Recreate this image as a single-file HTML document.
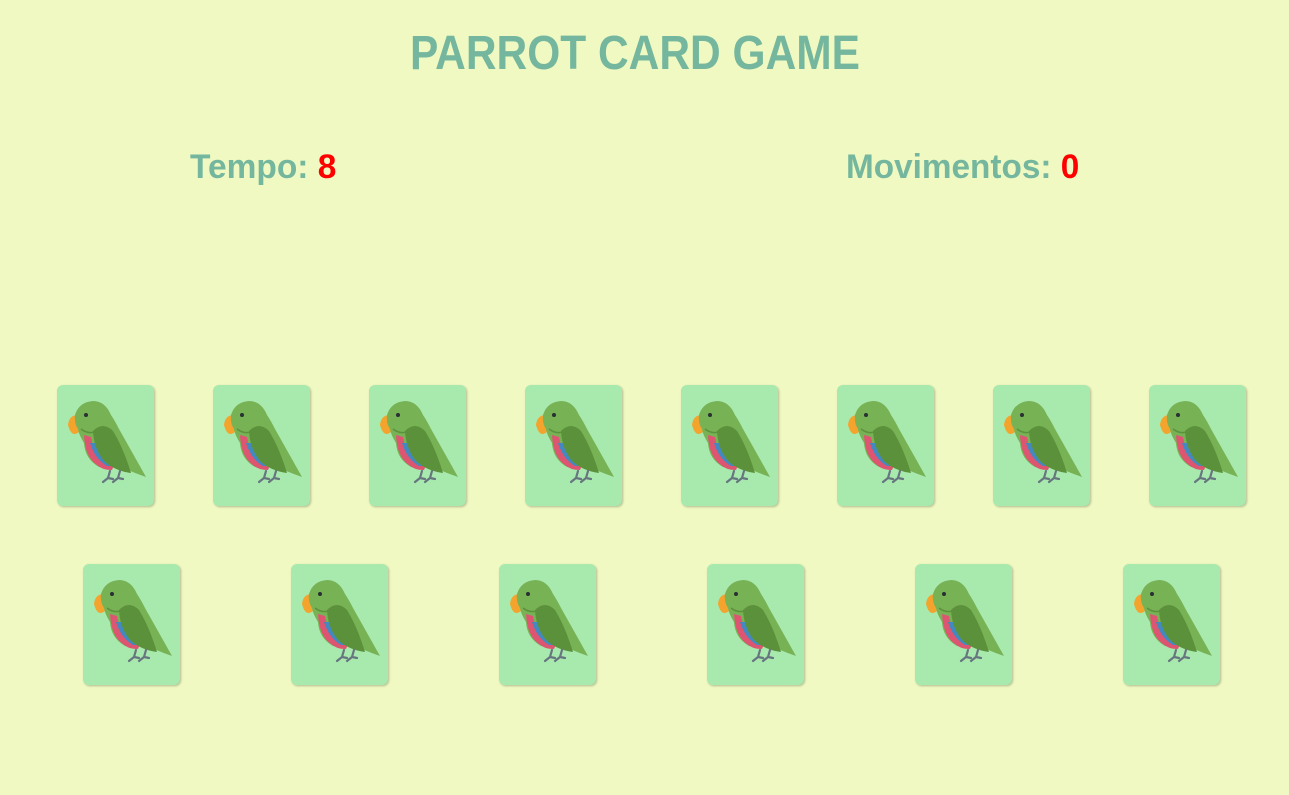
<!DOCTYPE html>
<html><head><meta charset="utf-8"><style>
html,body{margin:0;padding:0;}
body{width:1289px;height:795px;background:#eff9c1;font-family:"Liberation Sans",sans-serif;position:relative;overflow:hidden;}
.t{position:absolute;font-weight:bold;color:#75b79e;white-space:nowrap;transform-origin:left top;}
.r{color:#ff0000;}
.card{position:absolute;width:97px;height:121px;background:#a8e9ae;border-radius:6px;box-shadow:1px 1px 2px rgba(0,0,0,0.25);}
.card svg{position:absolute;left:0;top:0;}
</style></head><body>
<div class="t" style="left:410px;top:26px;font-size:48px;transform:scaleX(0.885);">PARROT CARD GAME</div>
<div class="t" style="left:190px;top:148px;font-size:34px;transform:scaleX(0.985);">Tempo: <span class="r">8</span></div>
<div class="t" style="left:846px;top:148px;font-size:34px;transform:scaleX(0.98);">Movimentos: <span class="r">0</span></div>

<svg width="0" height="0" style="position:absolute">
<defs>
<g id="p">
<path d="M11 40 Q12 30 21 30 L24 45 Q15 55 11 40 Z" fill="#f4a32c"/>
<path d="M18 30 Q22 17 36 16 Q48 16 54 30 Q58 36 62 44 L89 92 Q72 86 60 80 L42 82 Q28 74 27 58 Q22 50 21 44 Q17 38 18 30 Z" fill="#77b255"/>
<path d="M27 50 Q28 72 40 80 Q45 85 55 85 L57 80 Q37 72 34 52 Z" fill="#dd5571"/>
<path d="M33 58 Q38 74 50 81 L66 81 Q46 72 40 58 Z" fill="#4289c1"/>
<path d="M36 46 Q46 36 56 46 Q66 62 74 88 Q58 86 47 76 Q37 64 36 46 Z" fill="#5c913b"/>
<path d="M24 44 Q32 50 40 46" stroke="#5c913b" stroke-width="1.5" fill="none"/>
<circle cx="29" cy="30" r="2" fill="#292f33"/>
<path d="M53 86 L51 93 M51 93 L46 97 M51 93 L56 94 M63 86 L61 93 M61 93 L56 97 M61 93 L66 94" stroke="#66757f" stroke-width="2.2" fill="none" stroke-linecap="round"/>
</g>
</defs></svg>

<div class="card" style="left:57px;top:385px"><svg width="97" height="121"><use href="#p"/></svg></div>
<div class="card" style="left:213px;top:385px"><svg width="97" height="121"><use href="#p"/></svg></div>
<div class="card" style="left:369px;top:385px"><svg width="97" height="121"><use href="#p"/></svg></div>
<div class="card" style="left:525px;top:385px"><svg width="97" height="121"><use href="#p"/></svg></div>
<div class="card" style="left:681px;top:385px"><svg width="97" height="121"><use href="#p"/></svg></div>
<div class="card" style="left:837px;top:385px"><svg width="97" height="121"><use href="#p"/></svg></div>
<div class="card" style="left:993px;top:385px"><svg width="97" height="121"><use href="#p"/></svg></div>
<div class="card" style="left:1149px;top:385px"><svg width="97" height="121"><use href="#p"/></svg></div>

<div class="card" style="left:83px;top:564px"><svg width="97" height="121"><use href="#p"/></svg></div>
<div class="card" style="left:291px;top:564px"><svg width="97" height="121"><use href="#p"/></svg></div>
<div class="card" style="left:499px;top:564px"><svg width="97" height="121"><use href="#p"/></svg></div>
<div class="card" style="left:707px;top:564px"><svg width="97" height="121"><use href="#p"/></svg></div>
<div class="card" style="left:915px;top:564px"><svg width="97" height="121"><use href="#p"/></svg></div>
<div class="card" style="left:1123px;top:564px"><svg width="97" height="121"><use href="#p"/></svg></div>
</body></html>
